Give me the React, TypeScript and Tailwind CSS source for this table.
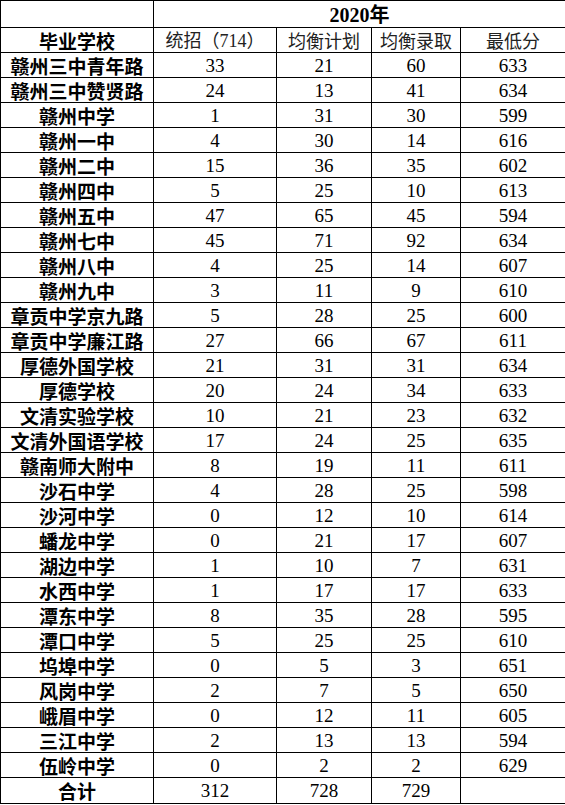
const rows: [string, string, string, string, string][] = [
  ["赣州三中青年路", "33", "21", "60", "633"],
  ["赣州三中赞贤路", "24", "13", "41", "634"],
  ["赣州中学", "1", "31", "30", "599"],
  ["赣州一中", "4", "30", "14", "616"],
  ["赣州二中", "15", "36", "35", "602"],
  ["赣州四中", "5", "25", "10", "613"],
  ["赣州五中", "47", "65", "45", "594"],
  ["赣州七中", "45", "71", "92", "634"],
  ["赣州八中", "4", "25", "14", "607"],
  ["赣州九中", "3", "11", "9", "610"],
  ["章贡中学京九路", "5", "28", "25", "600"],
  ["章贡中学廉江路", "27", "66", "67", "611"],
  ["厚德外国学校", "21", "31", "31", "634"],
  ["厚德学校", "20", "24", "34", "633"],
  ["文清实验学校", "10", "21", "23", "632"],
  ["文清外国语学校", "17", "24", "25", "635"],
  ["赣南师大附中", "8", "19", "11", "611"],
  ["沙石中学", "4", "28", "25", "598"],
  ["沙河中学", "0", "12", "10", "614"],
  ["蟠龙中学", "0", "21", "17", "607"],
  ["湖边中学", "1", "10", "7", "631"],
  ["水西中学", "1", "17", "17", "633"],
  ["潭东中学", "8", "35", "28", "595"],
  ["潭口中学", "5", "25", "25", "610"],
  ["坞埠中学", "0", "5", "3", "651"],
  ["风岗中学", "2", "7", "5", "650"],
  ["峨眉中学", "0", "12", "11", "605"],
  ["三江中学", "2", "13", "13", "594"],
  ["伍岭中学", "0", "2", "2", "629"],
];

const cjk = "font-['SimSun','Noto_Sans_CJK_SC',sans-serif]";
const num = "font-['Liberation_Serif','Noto_Sans_CJK_SC',serif]";
const cell = "border border-black p-0 text-center leading-none whitespace-nowrap";

export default function App() {
  return (
    <div className="bg-white w-[565px] h-[805px] overflow-hidden">
      <table className="table-fixed border-collapse w-[565px] text-black">
        <colgroup>
          <col className="w-[153px]" />
          <col className="w-[123px]" />
          <col className="w-[95px]" />
          <col className="w-[89px]" />
          <col className="w-[105px]" />
        </colgroup>
        <tbody>
          <tr className="h-[27px]">
            <td className={cell} />
            <td colSpan={4} className={`${cell} ${num} text-[20px] font-bold`}>
              2020<span className={cjk}>年</span>
            </td>
          </tr>
          <tr className="h-[25px]">
            <td className={`${cell} ${cjk} text-[19px] font-bold`}>毕业学校</td>
            <td className={`${cell} ${cjk} text-[18px] text-[#222]`}>
              统招（<span className={num}>714</span>）
            </td>
            <td className={`${cell} ${cjk} text-[18px] text-[#222]`}>均衡计划</td>
            <td className={`${cell} ${cjk} text-[18px] text-[#222]`}>均衡录取</td>
            <td className={`${cell} ${cjk} text-[18px] text-[#222]`}>最低分</td>
          </tr>
          {rows.map(([name, a, b, c, d]) => (
            <tr key={name} className="h-[25px]">
              <td className={`${cell} ${cjk} text-[19px] font-bold`}>{name}</td>
              <td className={`${cell} ${num} text-[19px]`}>{a}</td>
              <td className={`${cell} ${num} text-[19px]`}>{b}</td>
              <td className={`${cell} ${num} text-[19px]`}>{c}</td>
              <td className={`${cell} ${num} text-[19px]`}>{d}</td>
            </tr>
          ))}
          <tr className="h-[26px]">
            <td className={`${cell} ${cjk} text-[19px] font-bold`}>合计</td>
            <td className={`${cell} ${num} text-[19px]`}>312</td>
            <td className={`${cell} ${num} text-[19px]`}>728</td>
            <td className={`${cell} ${num} text-[19px]`}>729</td>
            <td className={cell} />
          </tr>
        </tbody>
      </table>
    </div>
  );
}
